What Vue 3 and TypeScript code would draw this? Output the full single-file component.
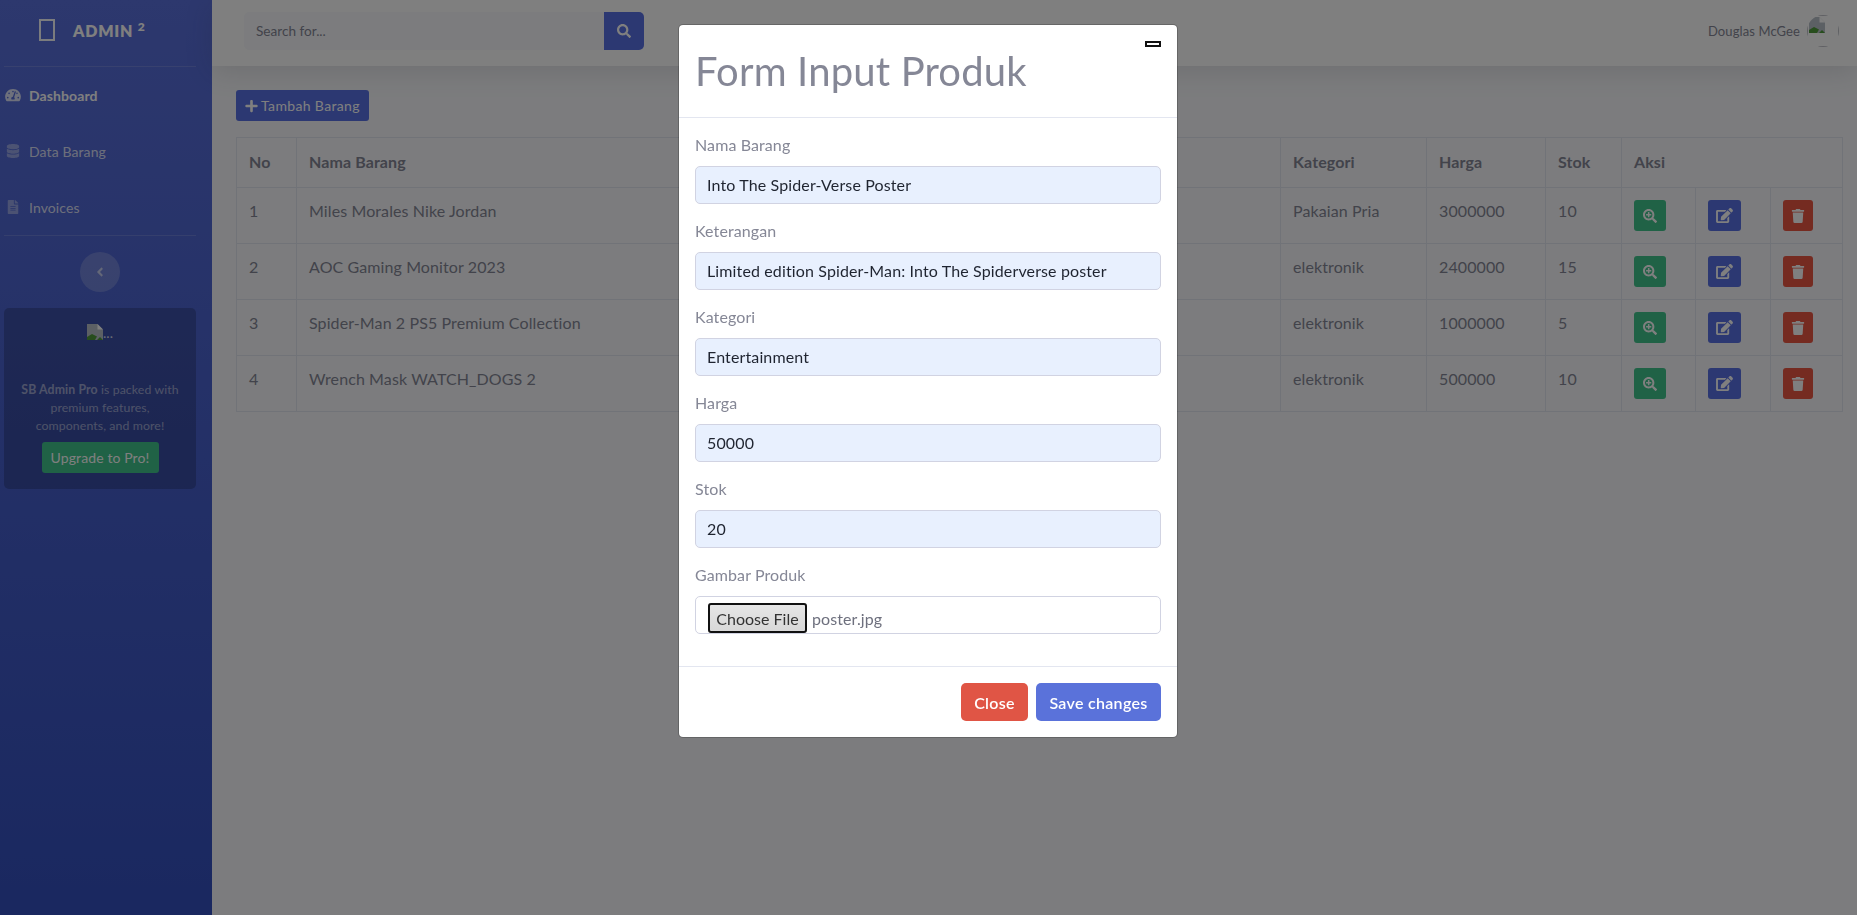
<script setup lang="ts">
interface Barang {
  no: number
  nama: string
  kategori: string
  harga: number
  stok: number
}

const barang: Barang[] = [
  { no: 1, nama: 'Miles Morales Nike Jordan', kategori: 'Pakaian Pria', harga: 3000000, stok: 10 },
  { no: 2, nama: 'AOC Gaming Monitor 2023', kategori: 'elektronik', harga: 2400000, stok: 15 },
  { no: 3, nama: 'Spider-Man 2 PS5 Premium Collection', kategori: 'elektronik', harga: 1000000, stok: 5 },
  { no: 4, nama: 'Wrench Mask WATCH_DOGS 2', kategori: 'elektronik', harga: 500000, stok: 10 },
]

const fields = [
  { label: 'Nama Barang', value: 'Into The Spider-Verse Poster' },
  { label: 'Keterangan', value: 'Limited edition Spider-Man: Into The Spiderverse poster' },
  { label: 'Kategori', value: 'Entertainment' },
  { label: 'Harga', value: '50000' },
  { label: 'Stok', value: '20' },
]
</script>

<template>
  <div class="page">
    <aside class="sidebar">
      <div class="side-inner">
        <div class="brand">
          <span class="tofu"></span>
          <span class="brand-text">ADMIN <sup>2</sup></span>
        </div>
        <hr class="divider" />
        <nav class="nav">
          <a class="nav-item active">
            <svg class="nav-icon" viewBox="0 0 576 512"><path d="M288 32C128.94 32 0 160.94 0 320c0 52.8 14.25 102.26 39.06 144.8 5.61 9.62 16.3 15.2 27.44 15.2h443c11.14 0 21.83-5.58 27.44-15.2C561.75 422.26 576 372.8 576 320c0-159.06-128.94-288-288-288zm0 64c14.71 0 26.58 10.13 30.32 23.65-1.11 2.26-2.64 4.23-3.45 6.67l-9.22 27.67c-5.13 3.49-10.97 6.01-17.64 6.01-17.67 0-32-14.33-32-32S270.33 96 288 96zM96 384c-17.67 0-32-14.33-32-32s14.33-32 32-32 32 14.33 32 32-14.33 32-32 32zm48-160c-17.67 0-32-14.33-32-32s14.33-32 32-32 32 14.33 32 32-14.33 32-32 32zm246.77-72.41l-61.33 184C343.13 347.33 352 364.54 352 384c0 11.72-3.38 22.55-8.88 32H232.88c-5.5-9.45-8.88-20.28-8.88-32 0-33.94 26.5-61.43 59.9-63.59l61.34-184.01c4.17-12.56 17.73-19.45 30.36-15.17 12.57 4.19 19.35 17.79 15.17 30.36zm14.66 57.2l15.52-46.55c3.47-1.29 7.13-2.23 11.05-2.23 17.67 0 32 14.33 32 32s-14.33 32-32 32c-11.38-.01-20.89-6.28-26.57-15.22zM480 384c-17.67 0-32-14.33-32-32s14.33-32 32-32 32 14.33 32 32-14.33 32-32 32z"/></svg>
            <span>Dashboard</span>
          </a>
          <a class="nav-item">
            <svg class="nav-icon" viewBox="0 0 448 512"><path d="M448 73.143v45.714C448 159.143 347.667 192 224 192S0 159.143 0 118.857V73.143C0 32.857 100.333 0 224 0s224 32.857 224 73.143zM448 176v102.857C448 319.143 347.667 352 224 352S0 319.143 0 278.857V176c48.125 33.143 136.208 48.572 224 48.572S399.874 209.143 448 176zm0 160v102.857C448 479.143 347.667 512 224 512S0 479.143 0 438.857V336c48.125 33.143 136.208 48.572 224 48.572S399.874 369.143 448 336z"/></svg>
            <span>Data Barang</span>
          </a>
          <a class="nav-item">
            <svg class="nav-icon" viewBox="0 0 384 512"><path d="M224 136V0H24C10.7 0 0 10.7 0 24v464c0 13.3 10.7 24 24 24h336c13.3 0 24-10.7 24-24V160H248c-13.2 0-24-10.8-24-24zm64 236c0 6.6-5.4 12-12 12H108c-6.6 0-12-5.4-12-12v-8c0-6.6 5.4-12 12-12h168c6.6 0 12 5.4 12 12v8zm0-64c0 6.6-5.4 12-12 12H108c-6.6 0-12-5.4-12-12v-8c0-6.6 5.4-12 12-12h168c6.6 0 12 5.4 12 12v8zm0-72v8c0 6.6-5.4 12-12 12H108c-6.6 0-12-5.4-12-12v-8c0-6.6 5.4-12 12-12h168c6.6 0 12 5.4 12 12zm96-114.1v6.1H256V0h6.1c6.4 0 12.5 2.5 17 7l97.9 98c4.5 4.5 7 10.6 7 16.9z"/></svg>
            <span>Invoices</span>
          </a>
        </nav>
        <hr class="divider" />
        <button class="toggle">
          <svg viewBox="0 0 256 512"><path d="M31.7 239l136-136c9.4-9.4 24.6-9.4 33.9 0l22.6 22.6c9.4 9.4 9.4 24.6 0 33.9L127.9 256l96.4 96.4c9.4 9.4 9.4 24.6 0 33.9L201.7 409c-9.4 9.4-24.6 9.4-33.9 0l-136-136c-9.5-9.4-9.5-24.6-.1-34z"/></svg>
        </button>
        <div class="promo">
          <div class="broken-wrap">
            <svg class="broken" viewBox="0 0 16 16"><path d="M0 0h10.500L16 5.500V16H0z" fill="#b9c0c8"/><path d="M0 16v-3l5-3 5 2.500-2 3.500z" fill="#4f9a3a"/><path d="M10.500 0v5.500H16z" fill="#fff"/><path d="M10 16l3-3 3 3z" fill="#4f9a3a"/></svg>
            <span class="broken-alt">...</span>
          </div>
          <p class="promo-text"><strong>SB Admin Pro</strong> is packed with premium features, components, and more!</p>
          <a class="btn-upgrade">Upgrade to Pro!</a>
        </div>
      </div>
    </aside>

    <div class="main">
      <header class="topbar">
        <div class="search">
          <input class="search-input" type="text" placeholder="Search for..." />
          <button class="search-btn">
            <svg viewBox="0 0 512 512"><path d="M505 442.700L405.300 343c-4.500-4.500-10.600-7-17-7H372c27.600-35.300 44-79.700 44-128C416 93.100 322.900 0 208 0S0 93.100 0 208s93.100 208 208 208c48.300 0 92.700-16.400 128-44v16.300c0 6.400 2.500 12.500 7 17l99.700 99.700c9.400 9.400 24.600 9.400 33.900 0l28.300-28.300c9.400-9.400 9.400-24.600.1-34zM208 336c-70.700 0-128-57.200-128-128 0-70.700 57.200-128 128-128 70.700 0 128 57.200 128 128 0 70.700-57.200 128-128 128z"/></svg>
          </button>
        </div>
        <div class="user">
          <span class="user-name">Douglas McGee</span>
          <span class="avatar">
            <span class="avatar-frame">
              <svg class="broken" viewBox="0 0 16 16"><path d="M0 0h10.500L16 5.500V16H0z" fill="#b9c0c8"/><path d="M0 16v-3l5-3 5 2.500-2 3.500z" fill="#4f9a3a"/><path d="M10.500 0v5.500H16z" fill="#fff"/><path d="M10 16l3-3 3 3z" fill="#4f9a3a"/></svg>
            </span>
          </span>
        </div>
      </header>

      <section class="content">
        <button class="btn-add">
          <svg viewBox="0 0 448 512"><path d="M416 208H272V64c0-17.670-14.330-32-32-32h-32c-17.670 0-32 14.330-32 32v144H32c-17.670 0-32 14.330-32 32v32c0 17.670 14.330 32 32 32h144v144c0 17.670 14.330 32 32 32h32c17.670 0 32-14.330 32-32V304h144c17.670 0 32-14.330 32-32v-32c0-17.670-14.330-32-32-32z"/></svg>
          <span>Tambah Barang</span>
        </button>

        <table class="table">
          <colgroup>
            <col style="width: 60px" />
            <col style="width: 400px" />
            <col style="width: 584px" />
            <col style="width: 146px" />
            <col style="width: 119px" />
            <col style="width: 76px" />
            <col style="width: 74px" />
            <col style="width: 75px" />
            <col style="width: 72px" />
          </colgroup>
          <thead>
            <tr>
              <th>No</th>
              <th>Nama Barang</th>
              <th>Keterangan</th>
              <th>Kategori</th>
              <th>Harga</th>
              <th>Stok</th>
              <th colspan="3">Aksi</th>
            </tr>
          </thead>
          <tbody>
            <tr v-for="b in barang" :key="b.no">
              <td>{{ b.no }}</td>
              <td>{{ b.nama }}</td>
              <td></td>
              <td>{{ b.kategori }}</td>
              <td>{{ b.harga }}</td>
              <td>{{ b.stok }}</td>
              <td class="act-cell">
                <button class="act green">
                  <svg viewBox="0 0 512 512"><path d="M304 192v32c0 6.600-5.400 12-12 12h-56v56c0 6.600-5.400 12-12 12h-32c-6.600 0-12-5.400-12-12v-56h-56c-6.600 0-12-5.400-12-12v-32c0-6.600 5.400-12 12-12h56v-56c0-6.600 5.400-12 12-12h32c6.600 0 12 5.400 12 12v56h56c6.600 0 12 5.400 12 12zm201 284.700L476.700 505c-9.400 9.400-24.600 9.400-33.900 0L343 405.300c-4.500-4.500-7-10.600-7-17V372c-35.300 27.600-79.700 44-128 44C93.100 416 0 322.900 0 208S93.100 0 208 0s208 93.100 208 208c0 48.300-16.400 92.700-44 128h16.300c6.400 0 12.500 2.500 17 7l99.700 99.700c9.300 9.400 9.300 24.600 0 34zM344 208c0-75.200-60.800-136-136-136S72 132.800 72 208s60.800 136 136 136 136-60.800 136-136z"/></svg>
                </button>
              </td>
              <td class="act-cell">
                <button class="act blue">
                  <svg viewBox="0 0 576 512"><path d="M402.600 83.200l90.200 90.200c3.800 3.800 3.800 10 0 13.800L274.400 405.600l-92.800 10.300c-12.400 1.400-22.900-9.100-21.500-21.500l10.300-92.800L388.800 83.200c3.800-3.800 10-3.800 13.800 0zm162-22.900l-48.800-48.800c-15.200-15.200-39.900-15.200-55.200 0l-35.400 35.400c-3.800 3.800-3.800 10 0 13.800l90.200 90.200c3.800 3.800 10 3.800 13.800 0l35.400-35.400c15.200-15.300 15.200-40 0-55.200zM384 346.200V448H64V128h229.800c3.200 0 6.200-1.300 8.500-3.500l40-40c7.600-7.600 2.200-20.500-8.500-20.500H48C21.500 64 0 85.500 0 112v352c0 26.500 21.500 48 48 48h352c26.500 0 48-21.500 48-48V306.200c0-10.700-12.900-16-20.500-8.500l-40 40c-2.200 2.300-3.500 5.300-3.500 8.500z"/></svg>
                </button>
              </td>
              <td class="act-cell">
                <button class="act red">
                  <svg viewBox="0 0 448 512"><path d="M432 32H312l-9.400-18.700A24 24 0 0 0 281.100 0H166.800a23.720 23.720 0 0 0-21.400 13.300L136 32H16A16 16 0 0 0 0 48v32a16 16 0 0 0 16 16h416a16 16 0 0 0 16-16V48a16 16 0 0 0-16-16zM53.200 467a48 48 0 0 0 47.900 45h245.800a48 48 0 0 0 47.900-45L416 128H32z"/></svg>
                </button>
              </td>
            </tr>
          </tbody>
        </table>
      </section>
    </div>

    <div class="backdrop">
      <div class="modal">
        <div class="modal-header">
          <h1 class="modal-title">Form Input Produk</h1>
          <button class="modal-close"></button>
        </div>
        <div class="modal-body">
          <div v-for="f in fields" :key="f.label" class="field">
            <label class="field-label">{{ f.label }}</label>
            <input class="field-input" type="text" :value="f.value" />
          </div>
          <div class="field">
            <label class="field-label">Gambar Produk</label>
            <div class="file-box">
              <button class="file-btn">Choose File</button>
              <span class="file-name">poster.jpg</span>
            </div>
          </div>
        </div>
        <div class="modal-footer">
          <button class="btn close">Close</button>
          <button class="btn save">Save changes</button>
        </div>
      </div>
    </div>
  </div>
</template>

<style scoped>
.page {
  display: flex;
  min-height: 100vh;
  font-family: "Lato", "Noto Sans", sans-serif;
  font-size: 16px;
  letter-spacing: 0.1px;
  color: #858796;
  background: #f8f9fc;
}

/* sidebar */
.sidebar {
  width: 212px;
  flex-shrink: 0;
  background: linear-gradient(180deg, #5a70dc 0%, #3450c0 100%);
}
.side-inner {
  width: 200px;
  display: flex;
  flex-direction: column;
}
.brand {
  height: 66px;
  box-sizing: border-box;
  padding: 0 0 6px 39px;
  display: flex;
  align-items: center;
  gap: 18px;
}
.tofu {
  width: 16px;
  height: 22px;
  box-sizing: border-box;
  border: 2px solid #fff;
  opacity: 0.95;
}
.brand-text {
  color: #fff;
  font-weight: 800;
  font-size: 16px;
  letter-spacing: 0.8px;
}
.brand-text sup {
  font-size: 12px;
  line-height: 0;
}
.divider {
  margin: 0 4px;
  border: 0;
  border-top: 1px solid rgba(255, 255, 255, 0.15);
}
.nav {
  display: flex;
  flex-direction: column;
}
.nav-item {
  height: 56px;
  display: flex;
  align-items: center;
  gap: 8px;
  padding-left: 5px;
  font-size: 14px;
  color: rgba(255, 255, 255, 0.8);
}
.nav-item.active {
  color: #fff;
  font-weight: 700;
}
.nav-icon {
  width: 16px;
  height: 14px;
  fill: rgba(255, 255, 255, 0.4);
}
.nav-item.active .nav-icon {
  fill: rgba(255, 255, 255, 0.8);
}
.toggle {
  width: 40px;
  height: 40px;
  margin: 16px auto 16px;
  border: 0;
  padding: 0;
  border-radius: 50%;
  background: rgba(255, 255, 255, 0.2);
  display: flex;
  align-items: center;
  justify-content: center;
}
.toggle svg {
  width: 8px;
  height: 14px;
  fill: rgba(255, 255, 255, 0.6);
}
.promo {
  margin: 0 4px;
  height: 181px;
  box-sizing: border-box;
  border-radius: 5px;
  background: rgba(0, 0, 0, 0.2);
  display: flex;
  flex-direction: column;
  align-items: center;
  padding-top: 16px;
}
.broken-wrap {
  display: flex;
  align-items: flex-end;
  height: 16px;
  margin-bottom: 41px;
}
.broken {
  width: 16px;
  height: 16px;
  display: block;
}
.broken-alt {
  font-size: 14px;
  line-height: 14px;
  color: rgba(255, 255, 255, 0.8);
}
.promo-text {
  margin: 0 0 7px;
  width: 170px;
  text-align: center;
  font-size: 12.3px;
  line-height: 18px;
  color: rgba(255, 255, 255, 0.5);
}
.btn-upgrade {
  width: 117px;
  height: 31px;
  border-radius: 3px;
  background: #40c48c;
  color: #fff;
  font-size: 14px;
  display: flex;
  align-items: center;
  justify-content: center;
}

/* topbar */
.main {
  flex: 1;
  min-width: 0;
  display: flex;
  flex-direction: column;
}
.topbar {
  height: 66px;
  box-sizing: border-box;
  background: #fff;
  box-shadow: 0 5px 28px rgba(58, 59, 69, 0.15);
  display: flex;
  align-items: center;
  justify-content: space-between;
  padding: 0 18px 4px 32px;
}
.search {
  display: flex;
  width: 400px;
  height: 38px;
}
.search-input {
  flex: 1;
  min-width: 0;
  box-sizing: border-box;
  border: 1px solid #f8f9fc;
  border-radius: 5px 0 0 5px;
  background: #f8f9fc;
  padding: 0 11px;
  font: inherit;
  font-size: 13.6px;
  color: #858796;
}
.search-input::placeholder {
  color: #858796;
  opacity: 1;
}
.search-btn {
  width: 40px;
  border: 0;
  padding: 0;
  border-radius: 0 5px 5px 0;
  background: #5870e4;
  display: flex;
  align-items: center;
  justify-content: center;
}
.search-btn svg {
  width: 14px;
  height: 14px;
  fill: #fff;
}
.user {
  display: flex;
  align-items: center;
  gap: 7px;
}
.user-name {
  font-size: 13px;
  color: #858796;
}
.avatar {
  width: 32px;
  height: 32px;
  border-radius: 50%;
  overflow: hidden;
}
.avatar-frame {
  display: block;
  width: 32px;
  height: 32px;
  box-sizing: border-box;
  border: 1px solid #c0c1c8;
  padding: 1px;
}

/* content */
.content {
  padding: 24px 14px 0 24px;
}
.btn-add {
  height: 31px;
  width: 133px;
  border: 0;
  padding: 0;
  border-radius: 3px;
  background: #5870e4;
  color: #fff;
  font: inherit;
  font-size: 14px;
  letter-spacing: 0.35px;
  display: flex;
  align-items: center;
  justify-content: center;
  gap: 3px;
  margin-bottom: 16px;
}
.btn-add svg {
  width: 13px;
  height: 14px;
  fill: #fff;
}
.table {
  width: 1606px;
  table-layout: fixed;
  border-collapse: collapse;
  font-size: 16px;
}
.table th,
.table td {
  border: 1px solid #e3e6f0;
  padding: 11px 12px 12px;
  text-align: left;
  vertical-align: top;
  line-height: 24px;
  white-space: nowrap;
}
.table th {
  font-weight: 700;
  padding: 12px;
  height: 25px;
}
.table td.act-cell {
  padding: 12px;
}
.act {
  height: 31px;
  border: 0;
  padding: 0;
  border-radius: 3px;
  display: flex;
  align-items: center;
  justify-content: center;
}
.act svg {
  width: 14px;
  height: 14px;
  fill: #fff;
}
.green {
  width: 32px;
  background: #40c48c;
}
.blue {
  width: 33px;
  background: #5870e4;
}
.red {
  width: 30px;
  background: #ea5642;
}
.act.blue svg {
  width: 17px;
  height: 15px;
}

/* modal */
.backdrop {
  position: fixed;
  inset: 0;
  background: rgba(0, 0, 0, 0.5);
}
.modal {
  position: absolute;
  left: 678px;
  top: 24px;
  width: 500px;
  height: 714px;
  box-sizing: border-box;
  background: #fff;
  background-clip: padding-box;
  border: 1px solid rgba(0, 0, 0, 0.2);
  border-radius: 5px;
  display: flex;
  flex-direction: column;
}
.modal-header {
  height: 93px;
  box-sizing: border-box;
  border-bottom: 1px solid #e3e6f0;
  padding: 16px;
  position: relative;
}
.modal-title {
  margin: 0;
  font-size: 40px;
  font-weight: 400;
  line-height: 60px;
  letter-spacing: 0.17px;
  color: #858796;
}
.modal-close {
  position: absolute;
  right: 16px;
  top: 16px;
  width: 16px;
  height: 6px;
  padding: 0;
  box-sizing: border-box;
  border: 2px solid #111;
  background: #fff;
}
.modal-body {
  flex: 1;
  padding: 16px;
  display: flex;
  flex-direction: column;
  gap: 16px;
}
.field {
  display: flex;
  flex-direction: column;
  gap: 8px;
}
.field-label {
  line-height: 22px;
  height: 24px;
}
.field-input,
.file-box {
  height: 38px;
  box-sizing: border-box;
  width: 466px;
  border: 1px solid #d1d3e2;
  border-radius: 5px;
}
.field-input {
  background: #e8f0fe;
  padding: 0 11px 2px;
  font: inherit;
  letter-spacing: 0.13px;
  color: #1f2430;
}
.file-box {
  background: #fff;
  display: flex;
  align-items: center;
  padding: 6px 0 0 12px;
  gap: 5px;
}
.file-btn {
  width: 99px;
  height: 30px;
  box-sizing: border-box;
  border: 2px solid #111;
  border-radius: 3px;
  background: linear-gradient(180deg, #e6e6e6, #d8d8d8);
  padding: 0;
  font: inherit;
  color: #333;
}
.file-name {
  color: #6e707e;
}
.modal-footer {
  height: 71px;
  box-sizing: border-box;
  border-top: 1px solid #e3e6f0;
  display: flex;
  justify-content: flex-end;
  align-items: center;
  gap: 8px;
  padding: 0 16px;
}
.btn {
  height: 38px;
  border: 0;
  padding: 0;
  border-radius: 5px;
  font: inherit;
  font-weight: 600;
  letter-spacing: 0.3px;
  color: #fff;
}
.close {
  width: 67px;
  background: #e05545;
}
.save {
  width: 125px;
  background: #5a72da;
}
</style>

<style>
body {
  margin: 0;
}
</style>
